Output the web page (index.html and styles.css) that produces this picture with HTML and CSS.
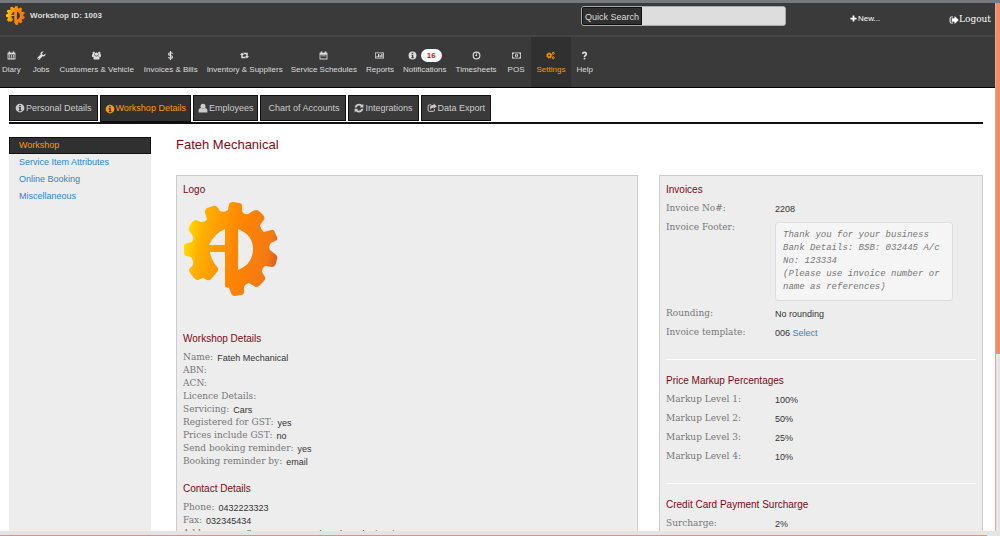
FILE: index.html
```html
<!DOCTYPE html>
<html lang="en">
<head>
<meta charset="utf-8">
<title>Workshop Details</title>
<link rel="stylesheet" href="styles.css">
</head>
<body>
<svg class="defs" aria-hidden="true">
  <defs>
    <linearGradient id="flame" x1="0" x2="1" y1="0.4" y2="0.6">
      <stop offset="0" stop-color="#ffe000"/><stop offset="0.17" stop-color="#ffb000"/><stop offset="0.55" stop-color="#ff8500"/><stop offset="0.9" stop-color="#f27a14"/><stop offset="1" stop-color="#dc5c24"/>
    </linearGradient>
    <symbol id="gear" viewBox="0 0 94 94">
      <path fill="url(#flame)" fill-rule="evenodd" d="M45 2Q46 0 49 0L55 1Q58 1 58 4L58 9Q60 13 64 12L69 9Q72 7 75 9L79 13Q82 16 79 19L76 23Q77 28 80 30L87 28Q90 27 91 31L93 35Q94 38 91 39L87 41Q84 44 86 48L91 52Q94 54 93 57L92 61Q91 65 88 65L81 64Q78 66 78 70L81 75Q82 77 80 79L75 84Q72 86 70 84L65 81Q61 82 60 85L60 90Q60 93 57 93L51 94Q48 94 47 91L45 86L41 85V50H26Q27 58 34 66Q35 67 33 70L28 76Q26 79 23 78L19 76L14 78Q11 78 10 76L6 71Q4 68 6 66L9 63Q10 59 7 55L2 54Q0 53 0 50V44Q0 42 3 41L8 40Q10 37 9 34L6 30Q4 28 5 25L8 20Q10 18 12 18L17 20Q22 20 23 17L21 11Q20 8 23 6L29 4Q32 3 34 6L36 9Q40 11 44 8ZM41 27Q31 31 25 43H41ZM54 27V68Q69 62 69 47Q69 33 54 27Z"/>
    </symbol>
    <symbol id="info" viewBox="0 0 16 16"><path fill-rule="evenodd" d="M8 1a7 7 0 1 0 0 14A7 7 0 0 0 8 1ZM6.7 3h2.6v2.3H6.7ZM6 6.5h3.3v4.7h1V13H6v-1.800h1V8.200H6Z"/></symbol>
    <symbol id="calendar" viewBox="0 0 16 16"><path fill-rule="evenodd" d="M1 3h2V1h3v2h4V1h3v2h2v12H1ZM2.500 6v7.500h11V6ZM3.500 7h2v1.500h-2ZM7 7h2v1.500H7ZM10.500 7h2v1.500h-2ZM3.500 9.500h2V11h-2ZM7 9.500h2V11H7ZM10.500 9.500h2V11h-2ZM3.500 11.800h9v1h-9Z"/></symbol>
    <symbol id="schedule" viewBox="0 0 16 16"><path fill-rule="evenodd" d="M1 3h2V1h3v2h4V1h3v2h2v12H1ZM2.500 6.500v7h11v-7ZM4 8h8v1.500H4Z"/></symbol>
    <symbol id="wrench" viewBox="0 0 16 16"><path d="M15 4.500 12 7 9.500 6.500 9 4l3-3Q8 0 6.500 3 6 5 6.500 6L1 11.500Q0 13 1.500 14.500 3 16 4.500 15L10 9.500Q13 10 14.500 8 15.500 6 15 4.500ZM3 12l1 1-1 1-1-1Z"/></symbol>
    <symbol id="group" viewBox="0 0 18 16"><circle cx="3.500" cy="3" r="2.400"/><circle cx="14.500" cy="3" r="2.400"/><circle cx="9" cy="5.300" r="3.300"/><path d="M0 10V7q0-2 2-2h2l2 4-2 2H1ZM18 10V7q0-2-2-2h-2l-2 4 2 2h3ZM3 15v-3q0-3 3-3l3 1 3-1q3 0 3 3v3l-1 1H4Z"/></symbol>
    <symbol id="dollar" viewBox="0 0 16 16"><path fill="none" stroke="currentColor" stroke-width="2" d="M12 4.500Q10 3 8 3 4.500 3 4.500 5.300 4.500 7.500 8 8t3.500 2.700Q11.500 13 8 13 5.500 13 4 11.500M8 0v16"/></symbol>
    <symbol id="retweet" viewBox="0 0 18 16"><path d="M4 2 0 7h2.500v6.500H12l-2-3H5.500V7H8ZM14 14l4-5h-2.500V2.500H6l2 3h4.500V9H10Z"/></symbol>
    <symbol id="report" viewBox="0 0 18 16"><path fill-rule="evenodd" d="M0 2h18v12H0ZM1.500 3.500v9h15v-9ZM3 9h2v2.500H3ZM6 5h2.500v6.500H6ZM9.500 7.500h2v4h-2ZM12.500 4.500H15v7h-2.500Z"/></symbol>
    <symbol id="clock" viewBox="0 0 16 16"><circle cx="8" cy="8" r="6" fill="none" stroke="currentColor" stroke-width="2"/><path d="M7.500 4H9v5H5.500V7.500h2Z"/></symbol>
    <symbol id="money" viewBox="0 0 18 16"><path fill-rule="evenodd" d="M0 2h18v12H0ZM3.500 3.500Q3 5 1.500 5.500v5Q3 11 3.500 12.500h11Q15 11 16.500 10.500v-5Q15 5 14.500 3.500ZM9 4.500q3 0 3 3.500t-3 3.500T6 8t3-3.500ZM8.200 6v4h1.600V6Z"/></symbol>
    <symbol id="cogs" viewBox="0 0 18 16"><circle cx="6.500" cy="8" r="3.500" fill="none" stroke="currentColor" stroke-width="2.600"/><circle cx="6.500" cy="8" r="5.300" fill="none" stroke="currentColor" stroke-width="2" stroke-dasharray="2.200 1.960"/><circle cx="14.500" cy="3.500" r="2" fill="none" stroke="currentColor" stroke-width="2"/><circle cx="14.500" cy="12.500" r="2" fill="none" stroke="currentColor" stroke-width="2"/></symbol>
    <symbol id="question" viewBox="0 0 16 16"><path fill="none" stroke="currentColor" stroke-width="3" d="M4.500 5Q5 2.500 8 2.500t3.300 2.700Q11.300 7 9.500 8 8 8.800 8 10.500"/><path d="M6.500 12h3v3h-3Z"/></symbol>
    <symbol id="user" viewBox="0 0 16 16"><circle cx="8" cy="5" r="4"/><path d="M1 15v-3q0-4 4-4 3 2.500 6 0 4 0 4 4v3Z"/></symbol>
    <symbol id="refresh" viewBox="0 0 16 16"><path d="M15 1v6H9l2-2Q6.500 2 4 7H1Q2.500 1 8 1q3 0 5 2ZM1 15V9h6l-2 2q4.500 3 7-2h3q-1.500 6-7 6-3 0-5-2Z"/></symbol>
    <symbol id="share" viewBox="0 0 18 16"><path fill="none" stroke="currentColor" stroke-width="1.800" d="M7.500 2.500H4Q2 2.500 2 4.500v7.500q0 2 2 2h7.500q2 0 2-2V10"/><path d="M12 0l5.500 4.800L12 9.500V7Q7.500 6.500 6.500 11.500 3 3 12 2.800Z"/></symbol>
    <symbol id="plus" viewBox="0 0 16 16"><path d="M6 1h4v5h5v4h-5v5H6v-5H1V6h5Z"/></symbol>
    <symbol id="logout" viewBox="0 0 18 16"><path fill="none" stroke="currentColor" stroke-width="1.800" d="M7 2.500H4Q2 2.500 2 4.500v7q0 2 2 2h3"/><path d="M10 1l7.500 7L10 15v-4H5V5h5Z"/></symbol>
  </defs>
</svg>
<div class="window">
  <div class="page">
    <header class="header">
      <div class="topbar">
        <div class="brand"><svg class="brand-mark"><use href="#gear"/></svg><strong>Workshop ID: 1003</strong></div>
        <div class="search"><label for="quick">Quick Search</label><input id="quick" type="text"></div>
        <button class="new" type="button"><svg class="icon small"><use href="#plus"/></svg>New...</button>
        <a class="logout" href="#"><svg class="icon"><use href="#logout"/></svg>Logout</a>
      </div>
      <nav class="mainnav">
        <a href="#"><svg class="icon small"><use href="#calendar"/></svg>Diary</a>
        <a href="#"><svg class="icon small"><use href="#wrench"/></svg>Jobs</a>
        <a href="#"><svg class="icon small"><use href="#group"/></svg>Customers &amp; Vehicle</a>
        <a href="#"><svg class="icon small"><use href="#dollar"/></svg>Invoices &amp; Bills</a>
        <a class="tight" href="#"><svg class="icon small"><use href="#retweet"/></svg>Inventory &amp; Suppliers</a>
        <a class="tight" href="#"><svg class="icon small"><use href="#schedule"/></svg>Service Schedules</a>
        <a href="#"><svg class="icon small"><use href="#report"/></svg>Reports</a>
        <a class="tight" href="#"><span class="notice"><svg class="icon small"><use href="#info"/></svg><b class="badge">16</b></span>Notifications</a>
        <a href="#"><svg class="icon small"><use href="#clock"/></svg>Timesheets</a>
        <a class="wide" href="#"><svg class="icon small"><use href="#money"/></svg>POS</a>
        <a class="wide current" href="#"><svg class="icon small"><use href="#cogs"/></svg>Settings</a>
        <a href="#"><svg class="icon small"><use href="#question"/></svg>Help</a>
      </nav>
    </header>
    <nav class="tabs">
      <a href="#"><svg class="icon"><use href="#info"/></svg>Personal Details</a>
      <a class="current" href="#"><svg class="icon"><use href="#info"/></svg>Workshop Details</a>
      <a class="tight" href="#"><svg class="icon"><use href="#user"/></svg>Employees</a>
      <a class="plain" href="#">Chart of Accounts</a>
      <a href="#"><svg class="icon"><use href="#refresh"/></svg>Integrations</a>
      <a href="#"><svg class="icon"><use href="#share"/></svg>Data Export</a>
    </nav>
    <div class="columns">
      <nav class="side">
        <a class="current" href="#">Workshop</a>
        <a href="#">Service Item Attributes</a>
        <a href="#">Online Booking</a>
        <a href="#">Miscellaneous</a>
      </nav>
      <main class="main">
        <h1>Fateh Mechanical</h1>
        <div class="panels">
          <section class="panel">
            <h2>Logo</h2>
            <div class="logo-box"><svg class="logo" role="img" aria-label="Workshop logo"><use href="#gear"/></svg></div>
            <h2>Workshop Details</h2>
            <dl class="facts">
              <div><dt>Name:</dt><dd>Fateh Mechanical</dd></div>
              <div><dt>ABN:</dt><dd></dd></div>
              <div><dt>ACN:</dt><dd></dd></div>
              <div><dt>Licence Details:</dt><dd></dd></div>
              <div><dt>Servicing:</dt><dd>Cars</dd></div>
              <div><dt>Registered for GST:</dt><dd>yes</dd></div>
              <div><dt>Prices include GST:</dt><dd>no</dd></div>
              <div><dt>Send booking reminder:</dt><dd>yes</dd></div>
              <div><dt>Booking reminder by:</dt><dd>email</dd></div>
            </dl>
            <h2>Contact Details</h2>
            <dl class="facts">
              <div><dt>Phone:</dt><dd>0432223323</dd></div>
              <div><dt>Fax:</dt><dd>032345434</dd></div>
              <div><dt>Address:</dt><dd>1 Melbourne East Road Boulevard, Victoria 3012</dd></div>
            </dl>
          </section>
          <section class="panel">
            <h2>Invoices</h2>
            <dl class="rows">
              <dt>Invoice No#:</dt><dd>2208</dd>
              <dt>Invoice Footer:</dt><dd><pre>Thank you for your business
Bank Details: BSB: 032445 A/c No: 123334
(Please use invoice number or name as references)</pre></dd>
              <dt>Rounding:</dt><dd>No rounding</dd>
              <dt>Invoice template:</dt><dd>006 <a href="#">Select</a></dd>
            </dl>
            <hr>
            <h2>Price Markup Percentages</h2>
            <dl class="rows">
              <dt>Markup Level 1:</dt><dd>100%</dd>
              <dt>Markup Level 2:</dt><dd>50%</dd>
              <dt>Markup Level 3:</dt><dd>25%</dd>
              <dt>Markup Level 4:</dt><dd>10%</dd>
            </dl>
            <hr>
            <h2>Credit Card Payment Surcharge</h2>
            <dl class="rows">
              <dt>Surcharge:</dt><dd>2%</dd>
            </dl>
          </section>
        </div>
      </main>
    </div>
  </div>
  <div class="vbar"></div>
  <div class="hbar"></div>
</div>
</body>
</html>
```
FILE: styles.css
```css
* { box-sizing: border-box; }
body {
  margin: 0;
  font-family: "Liberation Sans", Arial, sans-serif;
  font-size: 9px;
  line-height: 13px;
  color: #333;
  background: #fff;
}
a { color: #2a87cb; text-decoration: none; }
.defs { position: absolute; width: 0; height: 0; }
.window {
  display: grid;
  grid-template: minmax(0, 1fr) 5px / minmax(0, 1fr) 5px;
  height: 100vh;
  border-top: 3px solid #77797c;
  overflow: hidden;
}
.page { display: flex; flex-direction: column; overflow: hidden; }
.vbar { background: linear-gradient(#f08c66 66.5%, #e6e6e6 66.5%); border-left: 1px solid #e9a78e; }
.hbar { grid-column: 1 / 3; background: linear-gradient(90deg, #f08c66 98.7%, #e6e6e6 98.7%) bottom / 100% 1px no-repeat #e4e4e4; }

.icon { width: 10px; height: 10px; flex: none; fill: currentColor; }
.icon.small { width: 9px; height: 9px; }

.header { flex: none; background: #3a3a3a; border-bottom: 1px solid #000; color: #ddd; }
.topbar { display: flex; align-items: flex-start; height: 34px; padding: 3px 4px 0 6px; border-bottom: 2px solid #454545; }
.brand { display: flex; align-items: center; gap: 5px; width: 575px; font-size: 8px; }
.brand-mark { width: 19px; height: 19px; }
.search { display: flex; width: 205px; height: 20px; border: 1px solid #aaa; border-radius: 3px; background: #ddd; overflow: hidden; }
.search label { flex: none; padding: 3px 2px; background: #303030; border: 1px solid #111; line-height: 12px; }
.search input { flex: 1; min-width: 0; border: 0; padding: 0 4px; background: #ddd; }
.new { display: flex; align-items: center; gap: 1px; margin: 6px auto 0 64px; padding: 0; border: 0; background: none; color: #fff; font: 8px/13px "Liberation Sans", Arial, sans-serif; }
.new .icon { width: 7px; height: 7px; }
.logout { display: flex; align-items: center; margin-top: 7px; color: #fff; font: 9px/13px "DejaVu Serif", serif; }

.mainnav { display: flex; height: 50px; }
.mainnav a { display: flex; flex-direction: column; align-items: center; gap: 1px; padding: 12px 5px 0; color: #ddd; font-size: 8px; white-space: nowrap; }
.mainnav a:first-child { padding-left: 2px; padding-right: 7px; }
.mainnav a.tight { padding-left: 4px; padding-right: 4px; }
.mainnav a.wide { padding-left: 6px; padding-right: 6px; }
.mainnav a > .icon { margin: 2px 0; }
.mainnav a.current { background: #303030; color: #f90; }
.notice { display: flex; align-items: center; gap: 4px; }
.badge { padding: 0 6px; border-radius: 7px; background: #fff; color: #f00024; }

.tabs { flex: none; display: flex; align-items: flex-start; gap: 2px; margin: 7px 12px 0 9px; border-bottom: 2px solid #111; }
.tabs a { display: flex; align-items: center; gap: 1px; height: 26px; margin-bottom: 1px; padding: 0 5px; background: #3a3a3a; border: 1px solid #111; color: #ccc; }
.tabs a.current { height: 27px; margin-bottom: 0; background: #303030; color: #f90; }
.tabs a.current, .tabs a.tight { padding: 0 4px; }
.tabs a.plain { padding: 0 6px 0 7px; }

.columns { flex: 1; min-height: 0; display: grid; grid-template-columns: 142px minmax(0, 1fr); gap: 25px; margin: 13px 12px 0 9px; }
.side { background: #ededed; }
.side a { display: block; padding: 2px 10px; }
.side a.current { background: #303030; border: 1px solid #111; color: #f90; padding: 1px 9px; }
.main { min-width: 0; }
h1, h2 { margin: 0; font-weight: 400; color: #7c0a12; }
h1 { font-size: 13px; line-height: 16px; margin-bottom: 22px; }
h2 { font-size: 10px; line-height: 14px; margin-bottom: 5px; }
.panels { display: grid; grid-template-columns: 462fr 324fr; gap: 21px; align-items: start; }
.panel { min-width: 0; min-height: 400px; padding: 7px 6px 6px; background: #ededed; border: 1px solid #ccc; }
.logo-box { height: 130px; }
.logo { display: block; width: 94px; height: 94px; margin: 1px 0 0 1px; }
dl, dd { margin: 0; }
dt { color: #777; font: 9px/13px "DejaVu Serif", serif; }
.facts { margin-bottom: 14px; }
.facts div { display: flex; gap: 4px; height: 13px; }
.facts dd { padding-top: 1px; white-space: nowrap; }
.rows { display: grid; grid-template-columns: 109px minmax(0, 1fr); row-gap: 6px; }
.rows dd { padding-top: 1px; line-height: 12px; }
pre { margin: 0; width: 178px; padding: 6px 7px; background: #f5f5f5; border: 1px solid #ddd; border-radius: 3px; color: #777; font: italic 9px/13px "Liberation Mono", monospace; white-space: pre-wrap; }
hr { margin: 20px 0 14px; border: 0; border-top: 1px solid #fff; }
```
